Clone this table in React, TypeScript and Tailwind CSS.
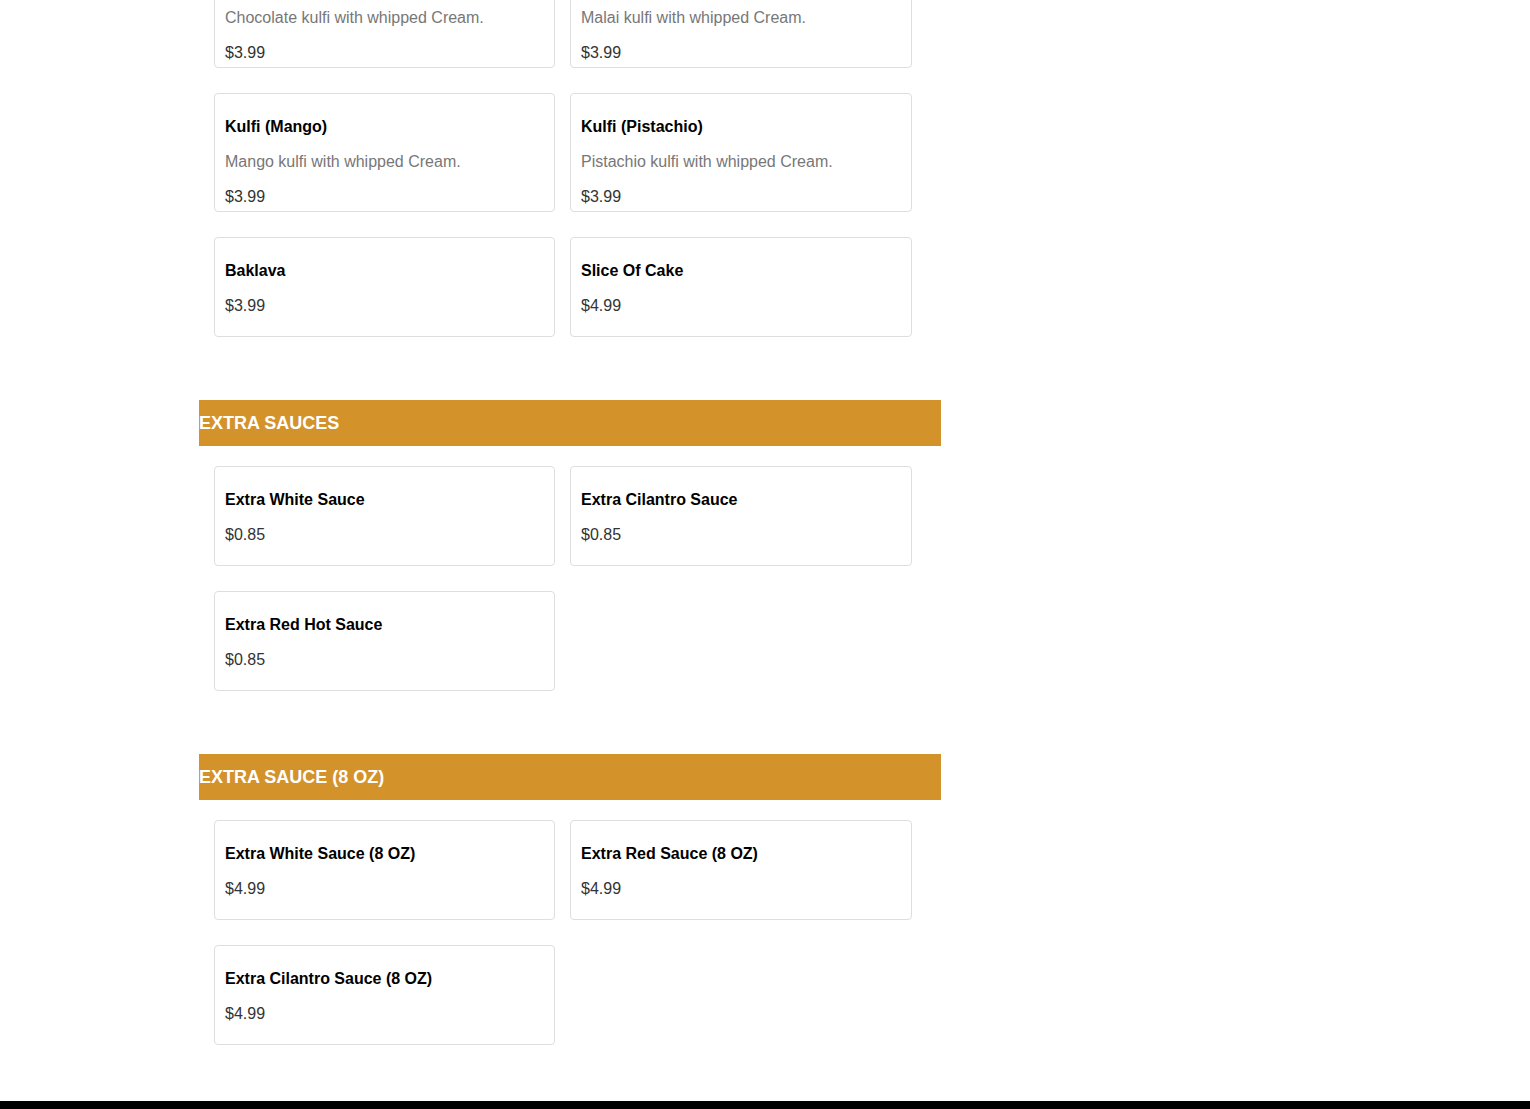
import React from "react";

type Item = { name: string; desc?: string; price: string };

const sections: { title?: string; items: Item[] }[] = [
  {
    items: [
      { name: "Kulfi (Chocolate)", desc: "Chocolate kulfi with whipped Cream.", price: "$3.99" },
      { name: "Kulfi (Malai)", desc: "Malai kulfi with whipped Cream.", price: "$3.99" },
      { name: "Kulfi (Mango)", desc: "Mango kulfi with whipped Cream.", price: "$3.99" },
      { name: "Kulfi (Pistachio)", desc: "Pistachio kulfi with whipped Cream.", price: "$3.99" },
      { name: "Baklava", price: "$3.99" },
      { name: "Slice Of Cake", price: "$4.99" },
    ],
  },
  {
    title: "EXTRA SAUCES",
    items: [
      { name: "Extra White Sauce", price: "$0.85" },
      { name: "Extra Cilantro Sauce", price: "$0.85" },
      { name: "Extra Red Hot Sauce", price: "$0.85" },
    ],
  },
  {
    title: "EXTRA SAUCE (8 OZ)",
    items: [
      { name: "Extra White Sauce (8 OZ)", price: "$4.99" },
      { name: "Extra Red Sauce (8 OZ)", price: "$4.99" },
      { name: "Extra Cilantro Sauce (8 OZ)", price: "$4.99" },
    ],
  },
];

function Card({ item }: { item: Item }) {
  return (
    <div className="min-h-[100px] rounded-[4px] border border-[#dedede] bg-white px-[10px] pt-[24px] pb-[4.6px]">
      <p className="text-[16px] leading-[18.4px] font-bold text-black">{item.name}</p>
      {item.desc && (
        <p className="mt-[16.6px] text-[16px] leading-[18.4px] text-[#777777]">{item.desc}</p>
      )}
      <p className="mt-[16.6px] text-[16px] leading-[18.4px] text-[#333333]">{item.price}</p>
    </div>
  );
}

export default function App() {
  return (
    <div
      className="min-h-screen bg-white"
      style={{ fontFamily: '"Liberation Sans", Arial, sans-serif' }}
    >
      <div className="ml-[199px] w-[742px] -mt-[51px]">
        {sections.map((s, i) => (
          <div key={i} className={i > 0 ? "mt-[63px]" : ""}>
            {s.title && (
              <div className="flex h-[46px] items-center bg-[#d4922a] text-[18px] font-bold text-white mb-[20px]">
                {s.title}
              </div>
            )}
            <div className="grid grid-cols-[341px_342px] gap-x-[15px] gap-y-[25px] pl-[15px]">
              {s.items.map((it) => (
                <Card key={it.name} item={it} />
              ))}
            </div>
          </div>
        ))}
      </div>
      <div className="mt-[56px] h-[60px] w-full bg-black" />
    </div>
  );
}
